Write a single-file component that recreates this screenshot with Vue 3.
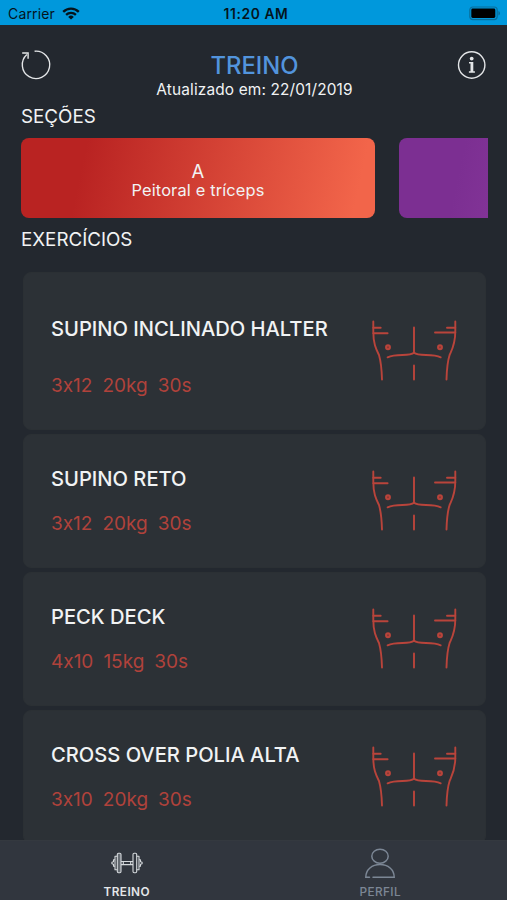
<script setup>
const exercises = [
  { name: 'SUPINO INCLINADO HALTER', sets: '3x12', load: '20kg', rest: '30s', tall: true },
  { name: 'SUPINO RETO', sets: '3x12', load: '20kg', rest: '30s' },
  { name: 'PECK DECK', sets: '4x10', load: '15kg', rest: '30s' },
  { name: 'CROSS OVER POLIA ALTA', sets: '3x10', load: '20kg', rest: '30s' },
]
</script>

<template>
  <div class="screen">
    <div class="status">
      <div class="carrier">
        <span class="carrier-name">Carrier</span>
        <svg width="18" height="13" viewBox="0 0 18 13">
          <g fill="none" stroke="#05141c" stroke-width="2.3">
            <path d="M1.2 4.9a11 11 0 0 1 15.6 0" />
            <path d="M4.1 7.9a7 7 0 0 1 9.8 0" />
          </g>
          <path d="M9 12.6 6.2 9.9a4 4 0 0 1 5.6 0z" fill="#05141c" />
        </svg>
      </div>
      <span class="clock">11:20 AM</span>
      <svg class="battery" width="32" height="15" viewBox="0 0 32 15">
        <rect x=".8" y="1" width="27.4" height="12.6" rx="3" fill="none" stroke="#086f9c" stroke-width="1.2" />
        <rect x="2.3" y="2.6" width="24" height="9.3" rx="1.4" fill="#000" />
        <path d="M29.4 5v4.6q1.6-.6 1.6-2.3T29.4 5" fill="#086f9c" />
      </svg>
    </div>

    <header class="header">
      <svg class="tool" width="32" height="32" viewBox="0 0 32 32" fill="none" stroke="#e4e6e8" stroke-width="1.4">
        <path d="M14.600 2.200A13.700 13.700 0 1 1 6.900 5.600" />
        <path d="M2.200 4h5.900v5.800" />
      </svg>
      <div class="heading">
        <h1>TREINO</h1>
        <p>Atualizado em: 22/01/2019</p>
      </div>
      <svg class="tool" width="30" height="32" viewBox="0 0 30 32">
        <circle cx="14.700" cy="16" r="13.200" fill="none" stroke="#e4e6e8" stroke-width="1.4" />
        <circle cx="14.700" cy="9.600" r="1.900" fill="#e4e6e8" />
        <path d="M12 13.100h4.300v9.200h1.600v1.400h-6v-1.400h1.600v-7.800h-1.500z" fill="#e4e6e8" />
      </svg>
    </header>

    <h2 class="label">SEÇÕES</h2>
    <div class="carousel">
      <div class="slide red">
        <span class="letter">A</span>
        <span class="muscles">Peitoral e tríceps</span>
      </div>
      <div class="slide purple"></div>
    </div>
    <h2 class="label exercises-label">EXERCÍCIOS</h2>

    <main class="list">
      <article v-for="item in exercises" :key="item.name" class="card" :class="{ tall: item.tall }">
        <div class="info">
          <h3>{{ item.name }}</h3>
          <p><span>{{ item.sets }}</span><span>{{ item.load }}</span><span>{{ item.rest }}</span></p>
        </div>
        <svg class="chest" width="88" height="64" viewBox="0 0 88 64" fill="none" stroke="#b9443b" stroke-width="1.9" stroke-linecap="round">
          <path d="M3.300 2.500v10C3.300 25 6 30 9 36c2 7 2.700 14 3 24.500" />
          <path d="M85.300 2.500v10c0 12.500-3 17.500-5.700 23.500-2.300 7-2.800 14-3.100 24.500" />
          <path d="M3.300 8.800h7.400M3.300 14.200h14.300M85.300 8.800h-8.300M85.300 13.500H65" />
          <path d="M44 8.500v25.500M44 46.500v14" />
          <path d="M17.600 38.300C27 34 39 38 44 33.800c5 4.200 18 .2 26.700 4.500" />
          <circle cx="18" cy="28.300" r="2" fill="#863a36" />
          <circle cx="70" cy="28.300" r="2" fill="#863a36" />
        </svg>
      </article>
    </main>

    <nav class="tabs">
      <div class="tab active">
        <svg width="32" height="32" viewBox="0 0 32 32" fill="none" stroke="#d5d9dc" stroke-width="1.1" stroke-linejoin="round">
          <rect x="6.300" y="6.300" width="3.700" height="19.500" rx="1.200" fill="#646a71" />
          <rect x="22" y="6.300" width="3.700" height="19.500" rx="1.200" />
          <path d="M6.300 9.300H4v13.500h2.300M4 12.800H2.500v2L.9 15.300v1.500l1.600.5v2H4" />
          <path d="M25.700 9.300H28v13.500h-2.300M28 12.800h1.500v2l1.600.5v1.500l-1.600.5v2H28" />
          <path d="M10 14.500h12M10 17.600h12M12.300 14.500v3.100M19.700 14.500v3.100" />
        </svg>
        <span>TREINO</span>
      </div>
      <div class="tab">
        <svg width="32" height="32" viewBox="0 0 32 32" fill="none" stroke="#7c8795" stroke-width="1.5" stroke-linecap="round">
          <ellipse cx="16" cy="9.200" rx="8.200" ry="7" />
          <path d="M5.500 30.200H1.800C1.800 22.500 8 17.500 16 17.500s14.200 5 14.200 12.700H9" />
        </svg>
        <span>PERFIL</span>
      </div>
    </nav>
  </div>
</template>

<style>
body {
  margin: 0;
  background: #23272e;
}
</style>

<style scoped>
.screen {
  display: flex;
  flex-direction: column;
  width: 507px;
  height: 900px;
  overflow: hidden;
  background: #23282f;
  color: #f1f3f4;
  font-family: Inter, "Liberation Sans", sans-serif;
}

h1, h2, h3, p {
  margin: 0;
  font-weight: 400;
  white-space: nowrap;
}

.status {
  flex: none;
  display: grid;
  grid-template-columns: 1fr auto 1fr;
  align-items: center;
  box-sizing: border-box;
  height: 25px;
  padding: 2px 6px 0 8px;
  background: #0098dc;
  color: #05141c;
  font-size: 14px;
}

.carrier {
  display: flex;
  align-items: center;
  gap: 7px;
}

.carrier-name {
  letter-spacing: 0.15px;
}

.clock {
  padding-left: 3px;
  font-weight: 600;
  font-size: 13.8px;
  letter-spacing: 0.6px;
}

.battery {
  justify-self: end;
}

.header {
  flex: none;
  display: flex;
  justify-content: space-between;
  height: 79px;
  padding: 0 20px;
}

.tool {
  flex: none;
  margin-top: 24px;
}

.heading {
  padding-top: 26px;
  text-align: center;
}

.heading h1 {
  color: #5294dd;
  font-size: 23.8px;
  font-weight: 500;
  line-height: 29px;
}

.heading p {
  font-size: 15.4px;
  letter-spacing: 0.15px;
  line-height: 20px;
}

.label {
  flex: none;
  padding-left: 21px;
  font-size: 18.8px;
  line-height: 26px;
}

.carousel {
  flex: none;
  display: flex;
  gap: 24px;
  height: 80px;
  margin: 8px 19px 0 21px;
  overflow: hidden;
}

.slide {
  flex: none;
  display: flex;
  flex-direction: column;
  align-items: center;
  justify-content: center;
  width: 354px;
  border-radius: 8px;
}

.red {
  background: linear-gradient(102deg, #b92322 18%, #f2654a 94%);
}

.purple {
  background: linear-gradient(102deg, #7c2f92 18%, #a14cb0 94%);
}

.letter {
  padding-top: 4px;
  font-size: 18.5px;
  line-height: 19px;
}

.muscles {
  font-size: 16.4px;
  letter-spacing: 0.15px;
  line-height: 18px;
}

.exercises-label {
  margin-top: 9px;
}

.list {
  flex: 1;
  display: flex;
  flex-direction: column;
  gap: 4px;
  min-height: 0;
  padding: 19px 21px 0 23px;
  overflow: hidden;
}

.card {
  flex: none;
  display: flex;
  justify-content: space-between;
  box-sizing: border-box;
  height: 134px;
  padding: 33px 27px 0 27px;
  border: 1px solid #2b3034;
  border-radius: 8px;
  background: #2c3136;
}

.card.tall {
  height: 158px;
  padding-top: 45px;
}

.info h3 {
  margin-top: -1px;
  font-size: 20.15px;
  font-weight: 500;
  line-height: 24px;
}

.info p {
  display: flex;
  gap: 10px;
  margin-top: 21px;
  color: #b0423b;
  font-size: 19px;
  font-feature-settings: "calt" 0;
  line-height: 24px;
}

.tall .info p {
  margin-top: 33px;
}

.chest {
  flex: none;
  margin-top: 1px;
}

.tabs {
  flex: none;
  display: flex;
  height: 59px;
  background: #31363e;
  border-top: 1px solid #34393f;
}

.tab {
  flex: 1;
  display: flex;
  flex-direction: column;
  align-items: center;
  padding-top: 6px;
  color: #7c8795;
  font-size: 11.8px;
  font-weight: 500;
  letter-spacing: 0.4px;
  line-height: 14px;
}

.tab span {
  margin-top: 6px;
}

.active {
  color: #e4e7e9;
  font-weight: 600;
}
</style>
